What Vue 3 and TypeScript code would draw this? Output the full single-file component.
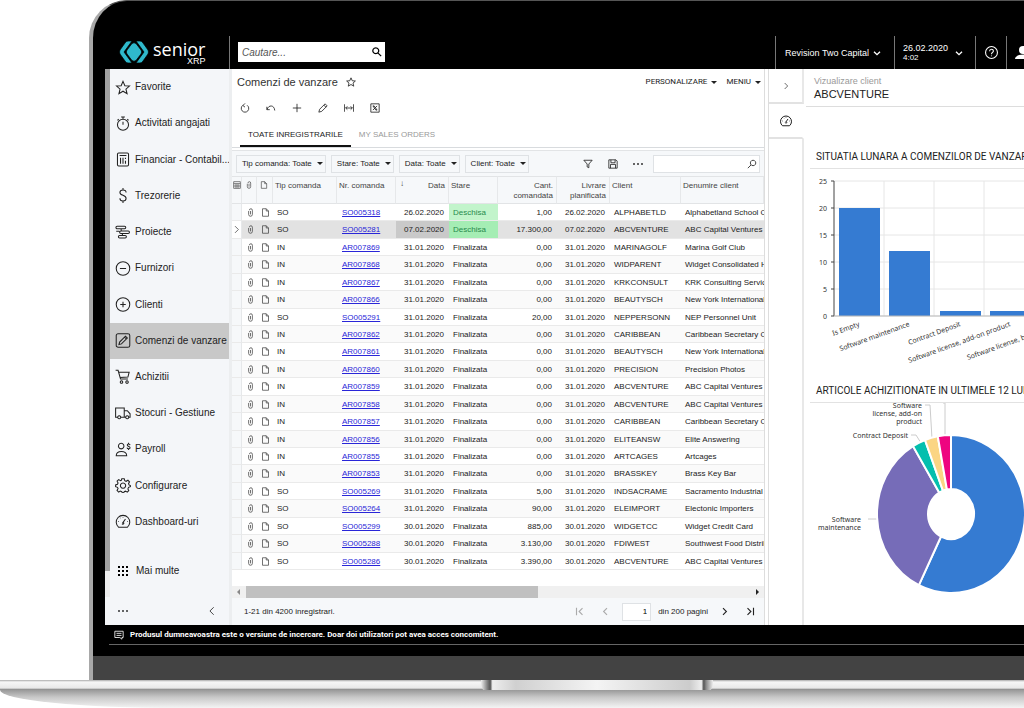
<script setup lang="ts">
interface MenuItem { label: string; icon: string; active?: boolean }
interface Order { type: string; no: string; date: string; status: string; qty: string; client: string; name: string }

const icons: Record<string, string> = {
  star: 'M12 2l3 7 7.500.6-5.700 5 1.800 7.400L12 18l-6.600 4 1.800-7.400-5.700-5L9 9z',
  stopwatch: 'M12 5a9 9 0 1 0 0 18 9 9 0 0 0 0-18zM12 14V9M9 1.500h6M12 2v3M19 5l2 2M3 7l2-2',
  calc: 'M5 1.500h14a2 2 0 0 1 2 2v17a2 2 0 0 1-2 2H5a2 2 0 0 1-2-2v-17a2 2 0 0 1 2-2zM6.500 5.500h11M8 9v10M12 9v10M16 9v2M16 14v5',
  dollar: 'M17 7c0-2.500-2.200-4-5-4S7 4.500 7 7c0 5.500 10 4 10 9.500 0 3-2.200 4.500-5 4.500s-5-1.500-5-4.500M12 0v3M12 21v3',
  projects: 'M2.500 2h12a1.500 1.500 0 0 1 0 4h-12a1.500 1.500 0 0 1 0-4zM9 6v3M8.500 9.500h12a1.500 1.500 0 0 1 0 4h-12a1.500 1.500 0 0 1 0-4zM11 13.500v3.500M6.500 17h9a1.500 1.500 0 0 1 0 4h-9a1.500 1.500 0 0 1 0-4zM1 10h5',
  minus: 'M12 1a11 11 0 1 0 0 22 11 11 0 0 0 0-22zM7 12h10',
  plusCircle: 'M12 1a11 11 0 1 0 0 22 11 11 0 0 0 0-22zM7.500 12h9M12 7.500v9',
  edit: 'M4 1h16a3 3 0 0 1 3 3v16a3 3 0 0 1-3 3H4a3 3 0 0 1-3-3V4a3 3 0 0 1 3-3zM5.500 18.500l1-4L16 5l3 3-9.500 9.500zM14.500 6.500l3 3',
  cart: 'M0 2h4l4 14h12M5 5h17l-2 8-13 .5M9.500 19a2 2 0 1 0 .1 0zM18.500 19a2 2 0 1 0 .1 0z',
  truck: 'M3.500 18H0V3h14v15H8M14 7.500h5l4.500 5V18H21M14 18h2.500M5.800 15.500a2.500 2.500 0 1 0 .1 0zM18.800 15.500a2.500 2.500 0 1 0 .1 0z',
  payroll: 'M9 2a4.500 4.500 0 1 0 .1 0zM1 22c0-9 17-9 17 0zM23.500 5c-.5-3-5-2.500-4.500 0 .5 2.500 4.500 1.500 4.500 4 0 2.500-4.500 2.500-5 0M21 1v2M21 11v2',
  gear: 'M10 1h4l.8 3.200 2.300 1 2.900-1.700 2.600 2.600L21 9l.8 2 2.200 1v2l-3 1-1 2.500 1.400 3-2.500 2.300L16 21.200l-2 .8-1 2h-2l-1-2-2.500-1L5 22.800 2.300 20 4 17l-1-2-3-1v-3l3-1 1-2.200L2.400 5 5 2.400l3 1.800 1.300-.6zM12 8a4.200 4.200 0 1 0 .1 0z',
  gauge: 'M5 21.500a11 11 0 1 1 14 0zM11 15l5-7M12.500 13.500a1.500 1.500 0 1 1-2 2M5 12l-1 0M8 6.500l-.5-.5M12 4.500v1M20 12h-1',
  paperclip: 'M7 8v9a5 5 0 0 0 10 0V6a4 4 0 0 0-8 0M12 8v9',
  file: 'M4 2h10l6 6v14H4zM14 2v6h6',
  refresh: 'M7 5.500a9 9 0 1 0 10 0M12 1l-5 5 5 4',
  undo: 'M2 9v7h7M2.500 15.500C6 4 20 4 21 18',
  plus: 'M12 2v20M2 12h20',
  pencil: 'M2 22l2-7L17 2l5 5L9 20zM14 5l5 5',
  fit: 'M1 3v18M23 3v18M4 12h16M8 8l-4 4 4 4M16 8l4 4-4 4',
  excel: 'M2 2h20v20H2zM7 7h3l7 10h-3zM17 7l-10 10',
  funnel: 'M2 3h20l-8 9v9l-4-2v-7z',
  save: 'M2 2h17l3 3v17H2zM7 2v7h10V2M6 22v-9h12v9',
  search: 'M14.500 3a6.500 6.500 0 1 0 .1 0zM10 14l-8 8',
  searchTop: 'M9 2a7 7 0 1 0 .1 0zM14 14l8 8',
  left: 'M16 3l-9 9 9 9',
  right: 'M8 3l9 9-9 9',
  first: 'M4 2v20M20 3l-9 9 9 9',
  last: 'M20 2v20M4 3l9 9-9 9',
  down: 'M3 8l9 9 9-9',
  help: 'M12 1a11 11 0 1 0 0 22 11 11 0 0 0 0-22zM8.500 9.500c0-5 7-4.500 7-.5 0 3-3.500 2.500-3.500 6M12 17.500v1.500',
  note: 'M2 3h20v15h-3v4l-5-4H2zM6 8h12M6 13h12',
  columns: 'M2 2h20v20H2zM2 8h20M9 8v14M2 15h20M15 8v14'
}

const menu: MenuItem[] = [
  { label: 'Favorite', icon: 'star' },
  { label: 'Activitati angajati', icon: 'stopwatch' },
  { label: 'Financiar - Contabil...', icon: 'calc' },
  { label: 'Trezorerie', icon: 'dollar' },
  { label: 'Proiecte', icon: 'projects' },
  { label: 'Furnizori', icon: 'minus' },
  { label: 'Clienti', icon: 'plusCircle' },
  { label: 'Comenzi de vanzare', icon: 'edit', active: true },
  { label: 'Achizitii', icon: 'cart' },
  { label: 'Stocuri - Gestiune', icon: 'truck' },
  { label: 'Payroll', icon: 'payroll' },
  { label: 'Configurare', icon: 'gear' },
  { label: 'Dashboard-uri', icon: 'gauge' }
]

const tools = [
  { icon: 'refresh', label: 'Reincarca' },
  { icon: 'undo', label: 'Anuleaza' },
  { icon: 'plus', label: 'Adauga' },
  { icon: 'pencil', label: 'Editeaza' },
  { icon: 'fit', label: 'Ajusteaza coloane' },
  { icon: 'excel', label: 'Export Excel' }
]

const filters = ['Tip comanda: Toate', 'Stare: Toate', 'Data: Toate', 'Client: Toate']

const rows: Order[] = (
  [
    ['SO', 'SO005318', '26.02.2020', 'Deschisa', '1,00', 'ALPHABETLD', 'Alphabetland School Center'],
    ['SO', 'SO005281', '07.02.2020', 'Deschisa', '17.300,00', 'ABCVENTURE', 'ABC Capital Ventures'],
    ['IN', 'AR007869', '31.01.2020', 'Finalizata', '0,00', 'MARINAGOLF', 'Marina Golf Club'],
    ['IN', 'AR007868', '31.01.2020', 'Finalizata', '0,00', 'WIDPARENT', 'Widget Consolidated Holdings'],
    ['IN', 'AR007867', '31.01.2020', 'Finalizata', '0,00', 'KRKCONSULT', 'KRK Consulting Services'],
    ['IN', 'AR007866', '31.01.2020', 'Finalizata', '0,00', 'BEAUTYSCH', 'New York International School'],
    ['SO', 'SO005291', '31.01.2020', 'Finalizata', '20,00', 'NEPPERSONN', 'NEP Personnel Unit'],
    ['IN', 'AR007862', '31.01.2020', 'Finalizata', '0,00', 'CARIBBEAN', 'Caribbean Secretary Office'],
    ['IN', 'AR007861', '31.01.2020', 'Finalizata', '0,00', 'BEAUTYSCH', 'New York International School'],
    ['IN', 'AR007860', '31.01.2020', 'Finalizata', '0,00', 'PRECISION', 'Precision Photos'],
    ['IN', 'AR007859', '31.01.2020', 'Finalizata', '0,00', 'ABCVENTURE', 'ABC Capital Ventures'],
    ['IN', 'AR007858', '31.01.2020', 'Finalizata', '0,00', 'ABCVENTURE', 'ABC Capital Ventures'],
    ['IN', 'AR007857', '31.01.2020', 'Finalizata', '0,00', 'CARIBBEAN', 'Caribbean Secretary Office'],
    ['IN', 'AR007856', '31.01.2020', 'Finalizata', '0,00', 'ELITEANSW', 'Elite Answering'],
    ['IN', 'AR007855', '31.01.2020', 'Finalizata', '0,00', 'ARTCAGES', 'Artcages'],
    ['IN', 'AR007853', '31.01.2020', 'Finalizata', '0,00', 'BRASSKEY', 'Brass Key Bar'],
    ['SO', 'SO005269', '31.01.2020', 'Finalizata', '5,00', 'INDSACRAME', 'Sacramento Industrial Supply'],
    ['SO', 'SO005264', '31.01.2020', 'Finalizata', '90,00', 'ELEIMPORT', 'Electonic Importers'],
    ['SO', 'SO005299', '30.01.2020', 'Finalizata', '885,00', 'WIDGETCC', 'Widget Credit Card'],
    ['SO', 'SO005288', '30.01.2020', 'Finalizata', '3.130,00', 'FDIWEST', 'Southwest Food Distribution'],
    ['SO', 'SO005286', '30.01.2020', 'Finalizata', '3.390,00', 'ABCVENTURE', 'ABC Capital Ventures']
  ] as const
).map(([type, no, date, status, qty, client, name]) => ({ type, no, date, status, qty, client, name }))

const chart = { left: 30, base: 141, unit: 27, step: 50 }
const bars = [20, 12, 1, 1].map((value, i) => {
  const h = Math.round((value * chart.unit) / 5)
  return { x: chart.left + 5 + Math.round(i * 50.4), y: chart.base - h, h }
})
const ticks = [0, 5, 10, 15, 20, 25].map((v) => ({ v, y: chart.base - (v / 5) * chart.unit }))
const barLabels = ['Is Empty', 'Software maintenance', 'Contract Deposit', 'Software license, add-on product'].map(
  (text, i) => ({ text, x: 56 + Math.round(i * 50.4) })
)

const donutColors = ['#357bd2', '#766cb8', '#04bfae', '#fbd584', '#ee0580']
const donutValues = [20, 12, 1, 1, 1]
const slices = (() => {
  const total = donutValues.reduce((a, b) => a + b, 0)
  const cx = 147
  const cy = 111
  let sum = 0
  const at = (f: number, rx: number, ry: number) => {
    const a = f * 2 * Math.PI
    return `${(cx + rx * Math.sin(a)).toFixed(2)} ${(cy - ry * Math.cos(a)).toFixed(2)}`
  }
  return donutValues.map((v, i) => {
    const a = sum / total
    sum += v
    const b = sum / total
    const big = v / total > 0.5 ? 1 : 0
    return {
      color: donutColors[i],
      d: `M${at(a, 74, 79)}A74 79 0 ${big} 1 ${at(b, 74, 79)}L${at(b, 23, 25)}A23 25 0 ${big} 0 ${at(a, 23, 25)}Z`
    }
  })
})()
</script>

<template>
  <div class="stage">
    <div class="lid">
      <header class="topbar">
        <a class="brand" href="#" aria-label="senior XRP">
          <svg class="mark" viewBox="0 0 30 24" aria-hidden="true">
            <path class="teal" d="M9 1h4L5 12l8 11H9Q7 23 6 21L1 14q-1-2 0-4L6 3Q7 1 9 1z" />
            <path class="teal" d="M21 1h-4l8 11-8 11h4q2 0 3-2l5-7q1-2 0-4l-5-7q-1-2-3-2z" />
            <path class="teal" d="M13 3.500Q15 2 17 3.500L22 10q1.500 2 0 4l-5 6.500Q15 22 13 20.500L8 14q-1.500-2 0-4z" />
          </svg>
          <span class="wordmark"><span class="senior">senior</span><span class="xrp">XRP</span></span>
        </a>
        <label class="find">
          <input type="text" placeholder="Cautare..." aria-label="Cautare" />
          <svg class="ic bold" viewBox="0 0 24 24"><path :d="icons.searchTop" /></svg>
        </label>
        <button class="top-cell company">Revision Two Capital <svg class="ic bold" viewBox="0 0 24 24"><path :d="icons.down" /></svg></button>
        <button class="top-cell clock">
          <span>26.02.2020<small>4:02</small></span>
          <svg class="ic bold" viewBox="0 0 24 24"><path :d="icons.down" /></svg>
        </button>
        <button class="top-cell help" aria-label="Ajutor"><svg class="ic" viewBox="0 0 24 24"><path :d="icons.help" /></svg></button>
        <button class="top-cell user" aria-label="Utilizator">
          <svg viewBox="0 0 16 14"><circle cx="8" cy="4" r="4" /><path d="M0 13c0-6 16-6 16 0z" /></svg>
        </button>
      </header>

      <div class="app">
        <div class="strip"><i></i><b></b></div>
        <nav class="sidebar">
          <a v-for="item in menu" :key="item.label" href="#" :class="{ active: item.active }">
            <svg class="ic" viewBox="-1 0 26 24"><path :d="icons[item.icon]" /></svg>{{ item.label }}
          </a>
          <a class="more" href="#">
            <svg class="dots" viewBox="0 0 12 12">
              <template v-for="y in 3" :key="y"><rect v-for="x in 3" :key="x" :x="x * 4 - 3" :y="y * 4 - 3" width="2" height="2" /></template>
            </svg>Mai multe
          </a>
          <div class="side-foot">
            <button class="ellipsis" aria-label="Optiuni"><i></i><i></i><i></i></button>
            <button aria-label="Restrange"><svg class="ic" viewBox="0 0 24 24"><path :d="icons.left" /></svg></button>
          </div>
        </nav>

        <main class="main">
          <div class="title-row">
            <h1>Comenzi de vanzare</h1>
            <button aria-label="Favorit"><svg class="ic" viewBox="0 0 24 24"><path :d="icons.star" /></svg></button>
            <span class="grow"></span>
            <button class="menu-btn">PERSONALIZARE<i class="caret"></i></button>
            <button class="menu-btn">MENIU<i class="caret"></i></button>
          </div>
          <div class="toolbar">
            <button v-for="t in tools" :key="t.icon" :aria-label="t.label"><svg class="ic" viewBox="0 0 24 24"><path :d="icons[t.icon]" /></svg></button>
          </div>
          <div class="tabs">
            <button class="on">TOATE INREGISTRARILE</button>
            <button>MY SALES ORDERS</button>
          </div>
          <div class="filters">
            <button v-for="f in filters" :key="f" class="chip">{{ f }}<i class="caret"></i></button>
            <span class="grow"></span>
            <button class="tool" aria-label="Filtru"><svg class="ic" viewBox="0 0 24 24"><path :d="icons.funnel" /></svg></button>
            <button class="tool" aria-label="Salveaza"><svg class="ic" viewBox="0 0 24 24"><path :d="icons.save" /></svg></button>
            <button class="tool ellipsis" aria-label="Mai mult"><i></i><i></i><i></i></button>
            <label class="grid-find">
              <input type="text" aria-label="Cauta in lista" />
              <svg class="ic" viewBox="0 0 24 24"><path :d="icons.search" /></svg>
            </label>
          </div>
          <div class="grid">
            <table>
              <colgroup>
                <col class="c0" /><col class="c1" /><col class="c2" /><col class="c3" /><col class="c4" /><col class="c5" />
                <col class="c6" /><col class="c7" /><col class="c8" /><col class="c9" /><col />
              </colgroup>
              <thead>
                <tr>
                  <th><svg class="ic" viewBox="0 0 24 24"><path :d="icons.columns" /></svg></th>
                  <th><svg class="ic" viewBox="0 0 24 24"><path :d="icons.paperclip" /></svg></th>
                  <th><svg class="ic" viewBox="0 0 24 24"><path :d="icons.file" /></svg></th>
                  <th>Tip comanda</th>
                  <th>Nr. comanda</th>
                  <th class="num"><span class="sort">↓</span>Data</th>
                  <th>Stare</th>
                  <th class="num">Cant.<br />comandata</th>
                  <th class="num">Livrare<br />planificata</th>
                  <th>Client</th>
                  <th>Denumire client</th>
                </tr>
              </thead>
              <tbody>
                <tr v-for="(r, i) in rows" :key="r.no" :class="{ sel: i === 1 }">
                  <td class="ptr"><svg v-if="i === 1" class="ic" viewBox="0 0 24 24"><path :d="icons.right" /></svg></td>
                  <td class="icon"><svg class="ic" viewBox="0 0 24 24"><path :d="icons.paperclip" /></svg></td>
                  <td class="icon"><svg class="ic" viewBox="0 0 24 24"><path :d="icons.file" /></svg></td>
                  <td>{{ r.type }}</td>
                  <td class="link"><a href="#">{{ r.no }}</a></td>
                  <td class="num date">{{ r.date }}</td>
                  <td :class="{ open: r.status === 'Deschisa' }">{{ r.status }}</td>
                  <td class="num">{{ r.qty }}</td>
                  <td class="num">{{ r.date }}</td>
                  <td>{{ r.client }}</td>
                  <td>{{ r.name }}</td>
                </tr>
              </tbody>
            </table>
          </div>
          <div class="hscroll"><i class="arrow back"></i><span class="track"><b></b></span><i class="arrow"></i></div>
          <footer class="pager">
            <span>1-21 din 4200 inregistrari.</span>
            <span class="grow"></span>
            <button class="off" aria-label="Prima"><svg class="ic" viewBox="0 0 24 24"><path :d="icons.first" /></svg></button>
            <button class="off" aria-label="Inapoi"><svg class="ic" viewBox="0 0 24 24"><path :d="icons.left" /></svg></button>
            <input type="text" value="1" aria-label="Pagina" />
            <span>din 200 pagini</span>
            <button aria-label="Inainte"><svg class="ic" viewBox="0 0 24 24"><path :d="icons.right" /></svg></button>
            <button aria-label="Ultima"><svg class="ic" viewBox="0 0 24 24"><path :d="icons.last" /></svg></button>
          </footer>
        </main>

        <div class="rail">
          <button aria-label="Restrange panoul"><svg class="ic small" viewBox="0 0 24 24"><path :d="icons.right" /></svg></button>
          <button class="on" aria-label="Dashboard"><svg class="ic" viewBox="0 0 24 24"><path :d="icons.gauge" /></svg></button>
          <div class="rest"></div>
        </div>

        <aside class="panel">
          <div class="client"><span>Vizualizare client</span><strong>ABCVENTURE</strong></div>
          <h2 class="first-title">SITUATIA LUNARA A COMENZILOR DE VANZARE</h2>
          <svg class="chart" width="260" height="210" viewBox="0 0 260 210">
            <g class="gridlines">
              <line v-for="t in ticks" :key="t.v" x1="30" x2="260" :y1="t.y" :y2="t.y" />
              <line v-for="n in 4" :key="n" :x1="30 + n * chart.step" :x2="30 + n * chart.step" y1="6" y2="141" />
            </g>
            <rect v-for="b in bars" :key="b.x" class="bar" :x="b.x" :y="b.y" width="41" :height="b.h" />
            <line class="axis" x1="30" x2="30" y1="6" y2="141" />
            <line class="basis" x1="30" x2="260" y1="141" y2="141" />
            <g v-for="t in ticks" :key="t.v">
              <line class="axis" x1="27" x2="30" :y1="t.y" :y2="t.y" />
              <text x="23" :y="t.y + 3" text-anchor="end">{{ t.v }}</text>
            </g>
            <text v-for="l in barLabels" :key="l.text" :x="l.x" y="151" text-anchor="end" :transform="`rotate(-20 ${l.x} 151)`">{{ l.text }}</text>
            <text x="164" y="185" transform="rotate(-20 164 185)">Software license, b</text>
          </svg>
          <h2>ARTICOLE ACHIZITIONATE IN ULTIMELE 12 LUNI</h2>
          <svg class="donut" width="240" height="200" viewBox="0 0 240 200">
            <path class="lead" d="M121 2h5l2 34M139 0h2v32M107 32h5l5 8M64 116h13" />
            <path v-for="s in slices" :key="s.color" class="slice" :d="s.d" :fill="s.color" />
            <g text-anchor="end">
              <text x="118" y="5">Software</text>
              <text x="118" y="13">license, add-on</text>
              <text x="118" y="21">product</text>
              <text x="104" y="35">Contract Deposit</text>
              <text x="57" y="119">Software</text>
              <text x="57" y="127">maintenance</text>
            </g>
          </svg>
        </aside>
      </div>

      <div class="notice">
        <svg class="ic" viewBox="0 0 24 24"><path :d="icons.note" /></svg>
        Produsul dumneavoastra este o versiune de incercare. Doar doi utilizatori pot avea acces concomitent.
      </div>
      <div class="hinge"></div>
    </div>
    <div class="base"><div class="notch"></div></div>
    <div class="shade"></div>
  </div>
</template>

<style>
body {
  background: #fff;
  overflow: hidden;
}
</style>

<style scoped>
* {
  box-sizing: border-box;
}
.stage {
  font: 8px/10px "Liberation Sans", Arial, sans-serif;
  color: #222;
  overflow: hidden;
}
button {
  font: inherit;
  color: inherit;
  background: none;
  border: 0;
  padding: 0;
  display: flex;
  align-items: center;
  justify-content: center;
  white-space: nowrap;
}
a {
  color: inherit;
  text-decoration: none;
}
input {
  font: inherit;
  border: 0;
  padding: 0;
  min-width: 0;
  outline: 0;
}
.ic {
  width: 10px;
  height: 10px;
  fill: none;
  stroke: currentColor;
  stroke-width: 2;
  flex: none;
}
.ic.bold {
  stroke-width: 4;
}
.grow {
  flex: 1;
}
.caret {
  border: 3px solid transparent;
  border-top-color: #222;
  border-bottom: 0;
}
.ellipsis {
  gap: 2px;
}
.ellipsis i {
  width: 2px;
  height: 2px;
  border-radius: 1px;
  background: #333;
}

.lid {
  margin-left: 89px;
  border-left: 4px solid #a8a8a8;
  border-top: 1px solid #555;
  border-radius: 38px 0 0 0;
  background: #000;
  padding-top: 35px;
}
.topbar {
  display: flex;
  height: 33px;
  margin-left: 12px;
  color: #fff;
}
.brand {
  width: 125px;
  display: flex;
  padding: 4px 0 0 14px;
  border-right: 1px solid #777;
  color: #fff;
}
.mark {
  width: 30px;
  height: 24px;
}
.teal {
  fill: #2fb9cc;
  stroke: #000;
  stroke-width: 0.7;
}
.wordmark {
  display: flex;
  flex-direction: column;
  align-items: flex-end;
  margin-left: 4px;
  font-family: "Open Sans", sans-serif;
}
.senior {
  font-size: 18px;
  line-height: 18px;
}
.xrp {
  font: 9px/6px "Liberation Sans", Arial, sans-serif;
}
.find {
  display: flex;
  align-items: center;
  background: #fff;
  color: #000;
  width: 147px;
  height: 20px;
  margin: 6px auto 0 8px;
  padding: 0 3px 0 4px;
}
.find .ic {
  stroke-width: 3;
}
.find input {
  flex: 1;
  font-size: 10px;
  font-style: italic;
}
.find input::placeholder {
  color: #555;
}
.top-cell {
  border-left: 1px solid #777;
  color: #fff;
}
.company {
  width: 119px;
  gap: 4px;
  padding-right: 4px;
  font-size: 9px;
}
.company .ic,
.clock .ic {
  width: 8px;
  height: 8px;
}
.clock {
  width: 81px;
  gap: 7px;
  padding-right: 4px;
  font-size: 9px;
  text-align: left;
}
.clock small {
  display: block;
  font-size: 8px;
}
.help {
  width: 31px;
}
.help .ic {
  width: 13px;
  height: 13px;
}
.user {
  width: 18px;
  overflow: hidden;
  justify-content: flex-start;
  padding-left: 8px;
}
.user svg {
  width: 16px;
  height: 14px;
  flex: none;
  fill: #fff;
}

.app {
  display: flex;
  margin-left: 12px;
  background: #fff;
}
.strip {
  width: 5px;
  background: #f4f6f8;
  display: flex;
  flex-direction: column;
  padding-bottom: 28px;
}
.strip i {
  flex: 1;
  background: #a0a0a0;
}
.strip b {
  height: 26px;
  background: #ececec;
}
.sidebar {
  width: 119px;
  background: #f4f6f9;
  display: flex;
  flex-direction: column;
  font-size: 10px;
}
.sidebar a {
  flex: 1;
  display: flex;
  align-items: center;
  gap: 4px;
  padding-left: 5px;
  white-space: nowrap;
}
.sidebar a .ic {
  width: 16px;
  height: 15px;
  stroke-width: 1.7;
}
.sidebar .active {
  background: #c8c8c8;
}
.sidebar .more {
  flex: none;
  height: 57px;
  padding-top: 4px;
  gap: 7px;
  padding-left: 7px;
}
.dots {
  width: 12px;
  height: 12px;
}
.side-foot {
  height: 28px;
  display: flex;
  justify-content: space-between;
  padding: 0 12px 0 8px;
}

.main {
  flex: 1;
  min-width: 0;
  border-left: 3px solid #eceef0;
  border-right: 1px solid #ddd;
  display: flex;
  flex-direction: column;
}
.title-row {
  display: flex;
  align-items: center;
  height: 26px;
  padding: 0 3px 0 5px;
}
h1 {
  font-size: 11px;
  line-height: 14px;
  font-weight: 400;
  color: #333;
  margin: 0 8px 0 0;
}
.menu-btn {
  gap: 4px;
  margin-left: 9px;
  font-family: Roboto, sans-serif;
}
.toolbar {
  display: flex;
  height: 28px;
  padding-bottom: 2px;
}
.toolbar button {
  width: 26px;
}
.tabs {
  display: flex;
  height: 25px;
  padding-left: 8px;
  border-bottom: 1px solid #d8dbde;
}
.tabs button {
  width: 111px;
  border-bottom: 2px solid transparent;
  color: #999;
  padding-top: 2px;
}
.tabs button + button {
  width: 92px;
}
.tabs .on {
  color: #222;
  border-color: #111;
}
.filters {
  display: flex;
  align-items: center;
  height: 26px;
  margin-top: 2px;
  padding: 0 4px 0 4px;
  gap: 5px;
  background: #f6f8fa;
  border-top: 1px solid #e2e4e6;
}
.chip {
  height: 18px;
  border: 1px solid #dfe2e5;
  padding: 0 2px 0 5px;
  gap: 5px;
}
.tool {
  width: 20px;
}
.grid-find {
  display: flex;
  align-items: center;
  width: 107px;
  height: 18px;
  border: 1px solid #dfe2e5;
  background: #fff;
  padding: 0 2px;
}
.grid-find input {
  flex: 1;
}
.grid {
  overflow: hidden;
}
table {
  width: 100%;
  table-layout: fixed;
  border-collapse: separate;
  border-spacing: 0;
}
.c0 { width: 10px; }
.c1 { width: 15px; }
.c2 { width: 16px; }
.c3 { width: 64px; }
.c4 { width: 59px; }
.c5 { width: 53px; }
.c6 { width: 49px; }
.c7 { width: 59px; }
.c8 { width: 53px; }
.c9 { width: 71px; }
th {
  height: 28px;
  padding: 4px 3px 0 2px;
  vertical-align: top;
  text-align: left;
  font-weight: 400;
  color: #444;
  background: #f6f8fa;
  border-top: 1px solid #e2e4e6;
  border-bottom: 1px solid #e2e4e6;
  border-right: 1px solid #e6e8ea;
  white-space: nowrap;
}
th.num {
  position: relative;
}
th .ic {
  width: 8px;
  height: 8px;
  display: block;
  margin-left: 1px;
}
th:first-child {
  padding-left: 0;
}
.sort {
  position: absolute;
  left: 4px;
  top: 2px;
}
td {
  height: 17px;
  padding: 1px 5px 0 4px;
  border-bottom: 1px solid #eaeaea;
  white-space: nowrap;
  overflow: hidden;
}
td:last-child {
  padding-right: 0;
}
tr:nth-child(7n + 2) td,
tr:nth-child(7n + 4) td,
tr:nth-child(7n + 6) td {
  height: 18px;
}
tr:nth-child(even) td {
  background: #fafafa;
}
.num {
  text-align: right;
}
td.link {
  padding-left: 5px;
}
td a {
  color: #2a26d8;
  text-decoration: underline;
}
td.icon {
  padding: 0 0 0 4px;
}
td .ic {
  width: 9px;
  height: 9px;
  display: block;
  color: #444;
}
tr td.ptr {
  padding: 0;
  background: #f6f8fa;
  border-right: 1px solid #e6e8ea;
}
tr.sel td {
  background: #e2e2e2;
}
tr.sel td.ptr {
  background: #fff;
}
tr.sel td.date {
  background: #c9c9c9;
}
tr td.open {
  background: #c2f4cb;
  color: #278a4c;
}
tr.sel td.open {
  background: #a5edb4;
}
.hscroll {
  display: flex;
  align-items: center;
  height: 12px;
  margin-top: 16px;
  background: #f0f0f0;
  padding: 0 4px;
}
.arrow {
  border: 3px solid transparent;
  border-left-color: #222;
  border-right: 0;
  margin: 0 1px;
}
.arrow.back {
  border-right: 3px solid #888;
  border-left: 0;
}
.track {
  flex: 1;
  align-self: stretch;
  margin: 0 5px;
}
.track b {
  display: block;
  width: 58%;
  height: 100%;
  background: #c0c0c0;
}
.pager {
  display: flex;
  align-items: center;
  height: 27px;
  background: #f6f8fa;
  padding: 0 4px 0 12px;
  gap: 7px;
}
.pager button {
  width: 19px;
}
.pager .ic {
  width: 9px;
  height: 9px;
  stroke-width: 3;
}
.pager .off {
  color: #aaa;
}
.pager input {
  width: 29px;
  height: 18px;
  border: 1px solid #dfe2e5;
  text-align: right;
  padding-right: 3px;
}

.rail {
  width: 36px;
  margin-left: 3px;
  border-left: 1px solid #ddd;
  display: flex;
  flex-direction: column;
}
.rail button {
  height: 35px;
  border-right: 2px solid #e8e8e8;
  border-bottom: 2px solid #e2e2e2;
}
.rail .on {
  border-right-color: transparent;
}
.rail .ic {
  width: 12px;
  height: 12px;
}
.rail .ic.small {
  width: 8px;
  height: 8px;
}
.rest {
  flex: 1;
  border-right: 2px solid #e8e8e8;
}
.panel {
  width: 220px;
  overflow: hidden;
  white-space: nowrap;
}
.client {
  height: 38px;
  margin-left: 2px;
  padding: 7px 0 0 8px;
  border-bottom: 1px solid #ddd;
}
.client span {
  display: block;
  font-size: 9px;
  color: #999;
}
.client strong {
  display: block;
  font-weight: 400;
  font-size: 11px;
  line-height: 16px;
}
h2 {
  margin: 0 0 0 6px;
  padding-left: 6px;
  height: 18px;
  font: 400 10px/12px Roboto, sans-serif;
  border-bottom: 1px solid #e2e2e2;
}
.first-title {
  margin-top: 44px;
  margin-bottom: 6px;
}
.chart,
.donut {
  display: block;
}
.chart text,
.donut text {
  font: 7px "Noto Sans", sans-serif;
  fill: #333;
}
.gridlines line {
  stroke: #e6e6e6;
}
.bar {
  fill: #357bd2;
}
.axis {
  stroke: #444;
}
.basis {
  stroke: #bbb;
}
.lead {
  fill: none;
  stroke: #ccc;
}
.slice {
  stroke: #fff;
  stroke-width: 2;
}

.notice {
  display: flex;
  align-items: center;
  gap: 6px;
  height: 20px;
  margin: 0 0 11px 16px;
  padding-left: 5px;
  border-bottom: 1px solid #666;
  color: #fff;
  font-family: Roboto, sans-serif;
  font-weight: 700;
  white-space: nowrap;
}
.hinge {
  height: 24px;
  background: #434343;
}
.base {
  height: 10px;
  background: linear-gradient(#aaa, #f6f6f6 20%, #e8e8e8 80%, #777);
}
.notch {
  height: 11px;
  width: 232px;
  margin-left: 47%;
  border-radius: 0 0 6px 6px;
  background: linear-gradient(90deg, #eee, #777 3%, #555 4%, #eee 5%, #d0d0d0 15%, #f4f4f4 50%, #ccc 90%, #eee 95%, #555 96%, #888 97%, #eee);
}
.shade {
  height: 18px;
  border-bottom-left-radius: 180px 18px;
  background: linear-gradient(#999, #c8c8c8 40%, #f4f4f4);
}
</style>
